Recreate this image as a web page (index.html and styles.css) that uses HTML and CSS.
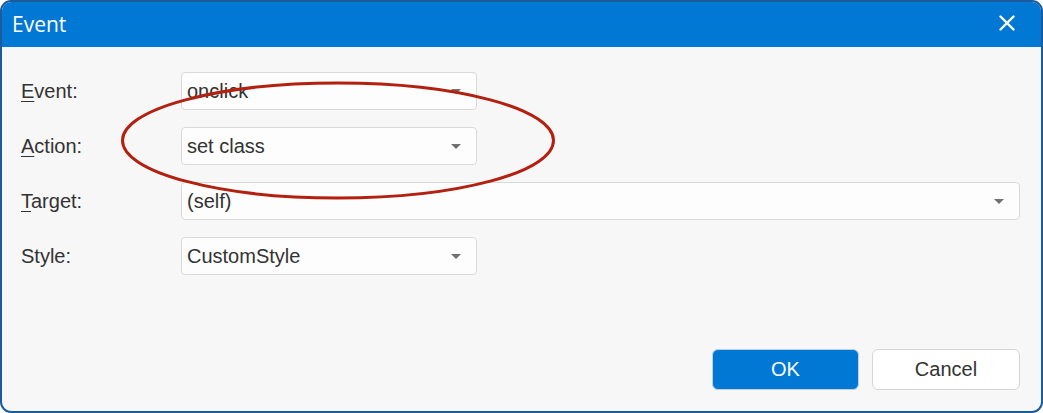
FILE: index.html
```html
<!DOCTYPE html>
<html>
<head>
<meta charset="utf-8">
<link rel="stylesheet" href="styles.css">
</head>
<body>
<div class="window">
  <div class="titlebar">
    <span class="title">Event</span>
    <svg class="close" width="16" height="16" viewBox="0 0 16 16"><path d="M1.5 1.5 L14.5 14.5 M14.5 1.5 L1.5 14.5" stroke="#fff" stroke-width="2.4" stroke-linecap="round"/></svg>
  </div>
  <div class="content">
    <div class="form">
      <div class="row">
        <label class="label"><u>E</u>vent:</label>
        <div class="select short"><span>onclick</span><i class="arrow"></i></div>
      </div>
      <div class="row">
        <label class="label"><u>A</u>ction:</label>
        <div class="select short"><span>set class</span><i class="arrow"></i></div>
      </div>
      <div class="row">
        <label class="label"><u>T</u>arget:</label>
        <div class="select wide"><span>(self)</span><i class="arrow"></i></div>
      </div>
      <div class="row">
        <label class="label">Style:</label>
        <div class="select short"><span>CustomStyle</span><i class="arrow"></i></div>
      </div>
    </div>
    <div class="buttons">
      <button class="btn primary">OK</button>
      <button class="btn">Cancel</button>
    </div>
  </div>
  <svg class="annot" width="1043" height="413" viewBox="0 0 1043 413">
    <ellipse cx="338" cy="140.5" rx="215.5" ry="57.5" fill="none" stroke="#b3200f" stroke-width="3"/>
  </svg>
</div>
</body>
</html>
```
FILE: styles.css
```css
html, body {
  margin: 0;
  padding: 0;
  background: #ffffff;
}
body {
  width: 1043px;
  height: 413px;
  overflow: hidden;
}
.window {
  position: relative;
  box-sizing: border-box;
  width: 1043px;
  height: 413px;
  border: 2px solid #1c5c9c;
  border-radius: 11px;
  background: #f7f7f7;
  overflow: hidden;
  display: flex;
  flex-direction: column;
}
.titlebar {
  height: 45px;
  flex: none;
  background: #0078d4;
  display: flex;
  align-items: center;
  justify-content: space-between;
  padding: 0 26px 0 10px;
}
.title {
  font-family: "Open Sans", "Noto Sans", sans-serif;
  font-size: 21px;
  color: #ffffff;
  line-height: 1;
  margin-top: -1px;
}
.close {
  display: block;
  margin-top: -4px;
}
.content {
  flex: 1;
  display: flex;
  flex-direction: column;
  padding: 25px 21px 21px 19px;
  font-family: "Liberation Sans", Arial, sans-serif;
  font-size: 20px;
  color: #333333;
}
.form {
  display: flex;
  flex-direction: column;
  gap: 17px;
}
.row {
  display: flex;
  align-items: center;
}
.label {
  width: 160px;
  flex: none;
}
.label u {
  text-decoration-thickness: 1px;
  text-underline-offset: 3px;
}
.select {
  box-sizing: border-box;
  height: 38px;
  background: #fdfdfd;
  border: 1px solid #d9d9d9;
  border-radius: 4px;
  display: flex;
  align-items: center;
  justify-content: space-between;
  padding: 0 15px 0 5px;
}
.select span {
  margin-top: 1px;
}
.short {
  width: 296px;
}
.wide {
  flex: 1;
}
.arrow {
  display: block;
  width: 0;
  height: 0;
  border-left: 5px solid transparent;
  border-right: 5px solid transparent;
  border-top: 5px solid #707070;
}
.buttons {
  margin-top: auto;
  display: flex;
  justify-content: flex-end;
  gap: 13px;
}
.btn {
  box-sizing: border-box;
  width: 148px;
  height: 41px;
  font-family: "Liberation Sans", Arial, sans-serif;
  font-size: 20px;
  color: #333333;
  background: #ffffff;
  border: 1px solid #d6d6d6;
  border-radius: 6px;
  padding: 0;
}
.btn.primary {
  width: 147px;
  background: #0078d4;
  border-color: #c0cfdc;
  color: #ffffff;
}
.annot {
  position: absolute;
  left: -2px;
  top: -2px;
  pointer-events: none;
}
```
